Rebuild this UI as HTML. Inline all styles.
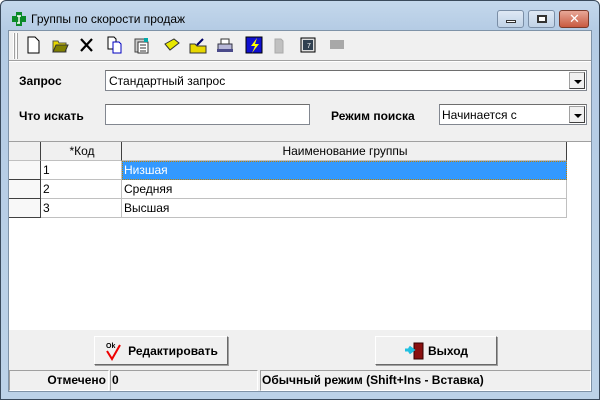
<!DOCTYPE html>
<html><head><meta charset="utf-8"><style>
*{box-sizing:border-box;margin:0;padding:0}
body{width:600px;height:400px;overflow:hidden;font-family:"Liberation Sans","DejaVu Sans",sans-serif;font-size:12px;background:#fff}
.win{position:absolute;left:0;top:0;width:600px;height:400px;background:linear-gradient(#c4d8ec,#b4cbe4 30px,#bcd2e8);border:1px solid #3a4a5c;border-radius:6px 6px 0 0}
.title{position:absolute;left:30px;top:11px;font-size:12px;color:#000}
.client{position:absolute;left:8px;top:30px;width:584px;height:362px;background:#f0f0f0;border:1px solid #7f93a8}
.abs{position:absolute}
.cbtn{position:absolute;top:9px;height:18px;border:1px solid #7a8ea6;border-radius:3px;background:linear-gradient(#dfe9f5,#c0d2e6)}
.in{position:absolute;background:#fff;border:1px solid #828790;border-top-color:#6e6e6e}
.arrow{position:absolute;right:1px;top:1px;width:16px;bottom:1px;background:#f0f0f0;border:1px solid #a0a0a0;border-right-color:#404040;border-bottom-color:#404040}
.arrow:after{content:"";position:absolute;left:4px;top:7px;border:4px solid transparent;border-top:4px solid #000;border-bottom:0}
.lbl{position:absolute;font-weight:bold;font-size:12px}
.btn{position:absolute;background:#f0f0f0;border:1px solid #fff;border-right-color:#696969;border-bottom-color:#696969;box-shadow:1px 1px 0 #a0a0a0;font-weight:bold;font-size:12px;display:flex;align-items:center;justify-content:center}
.sp{position:absolute;top:370px;height:21px;border:1px solid #a0a0a0;border-right-color:#fff;border-bottom-color:#fff;font-weight:bold;font-size:12px;line-height:19px}
.cell{position:absolute;border-right:1px solid #c0c0c0;border-bottom:1px solid #c0c0c0;line-height:18px;padding-left:2px}
</style></head><body>
<div class="win">
<svg class="abs" style="left:10px;top:10px" width="16" height="16"><rect x="5" y="1" width="6" height="14" fill="#0a8a28"/><rect x="1" y="5" width="14" height="6" fill="#0a8a28"/><path d="M6 5h4M8 5v7M6 12h3" stroke="#fff" stroke-width="1.4" fill="none"/></svg>
<div class="title">Группы по скорости продаж</div>
<div class="cbtn" style="left:496px;width:27px"><div class="abs" style="left:8px;top:9px;width:10px;height:3px;background:#fff;border:1px solid #333"></div></div>
<div class="cbtn" style="left:527px;width:27px"><div class="abs" style="left:8px;top:4px;width:10px;height:8px;border:2px solid #333;background:#fff"></div></div>
<div class="cbtn" style="left:558px;width:30px;background:linear-gradient(#e8a898,#c85a40);border-color:#7a3a2a"><div class="abs" style="left:9px;top:0px;color:#fff;font-weight:bold;font-size:13px">✕</div></div>
</div>
<div class="client"></div>
<div class="abs" style="left:13px;top:33px;width:2px;height:26px;border-left:1px solid #fff;border-right:1px solid #a0a0a0"></div>
<div class="abs" style="left:16px;top:33px;width:2px;height:26px;border-left:1px solid #fff;border-right:1px solid #a0a0a0"></div>
<svg class="abs" style="left:25px;top:36px" width="330" height="18">
<path d="M3 1h7l4 4v12H3z" fill="#fff" stroke="#000"/>
<path d="M28 5h5l1 2h7v9H28z" fill="#e8d800" stroke="#554" /><path d="M28 16l3-7h12l-3 7z" fill="#808000" stroke="#333"/>
<path d="M56 3l11 12M67 3L56 15" stroke="#000" stroke-width="2.2"/>
<path d="M83 1h6l2 2v10h-8z" fill="#fff" stroke="#000"/><path d="M88 6h6l2 2v9h-8z" fill="#fff" stroke="#0000c0"/>
<rect x="110" y="3" width="11" height="13" fill="#ccc" stroke="#444"/><rect x="113" y="6" width="10" height="11" fill="#fff" stroke="#333"/><path d="M115 9h6M115 12h6M115 15h6" stroke="#333"/><rect x="119" y="2" width="4" height="4" fill="#0aa"/>
<path d="M140 8l9-5 5 4-9 7z" fill="#e8e800" stroke="#333"/>
<path d="M165 8h5l2 2h9v7h-16z" fill="#e8d800" stroke="#333"/><path d="M172 9l6-6" stroke="#006" stroke-width="2"/>
<rect x="193" y="8" width="14" height="6" fill="#b8b8d8" stroke="#334"/><rect x="196" y="3" width="8" height="5" fill="#fff" stroke="#333"/><rect x="192" y="13" width="16" height="3" fill="#4a4a8a"/>
<rect x="221" y="1" width="16" height="16" fill="#1010d0" stroke="#000"/><path d="M232 2l-6 8h4l-3 7 7-9h-4z" fill="#ff0"/>
<path d="M250 3h6l2 2v12h-8z" fill="#c0c0c0" stroke="#aaa"/>
<rect x="276" y="2" width="14" height="14" fill="#e0e0e0" stroke="#000"/><rect x="278" y="4" width="10" height="10" fill="#304050"/><text x="282" y="12" font-size="7" fill="#fff" font-family="Liberation Sans">7</text>
<rect x="305" y="4" width="14" height="9" fill="#a8a8a8"/>
</svg>
<div class="abs" style="left:9px;top:60px;width:582px;height:2px;border-top:1px solid #a0a0a0;border-bottom:1px solid #fff"></div>
<div class="lbl" style="left:19px;top:74px">Запрос</div>
<div class="in" style="left:105px;top:70px;width:482px;height:21px"><span class="abs" style="left:3px;top:3px">Стандартный запрос</span><div class="arrow"></div></div>
<div class="lbl" style="left:19px;top:109px">Что искать</div>
<div class="in" style="left:105px;top:104px;width:205px;height:21px"></div>
<div class="lbl" style="left:331px;top:109px">Режим поиска</div>
<div class="in" style="left:439px;top:104px;width:148px;height:21px"><span class="abs" style="left:2px;top:3px">Начинается с</span><div class="arrow"></div></div>
<div class="abs" style="left:9px;top:141px;width:582px;height:189px;background:#fff;border-top:1px solid #a0a0a0"></div>
<div class="abs" style="left:9px;top:142px;width:558px;height:19px;background:#f0f0f0;border-bottom:1px solid #404040"></div>
<div class="cell" style="left:9px;top:142px;width:32px;height:19px;border-right-color:#404040"></div>
<div class="cell" style="left:41px;top:142px;width:81px;height:19px;text-align:center;border-right-color:#404040">*Код</div>
<div class="cell" style="left:122px;top:142px;width:445px;height:19px;text-align:center;border-right-color:#404040">Наименование группы</div>
<div class="cell" style="left:9px;top:161px;width:32px;height:19px;background:#f8f8f8;border-right-color:#404040;border-bottom-color:#404040"></div>
<div class="cell" style="left:9px;top:180px;width:32px;height:19px;background:#f8f8f8;border-right-color:#404040;border-bottom-color:#404040"></div>
<div class="cell" style="left:9px;top:199px;width:32px;height:19px;background:#f8f8f8;border-right-color:#404040;border-bottom-color:#404040"></div>
<div class="cell" style="left:41px;top:161px;width:81px;height:19px">1</div>
<div class="cell" style="left:41px;top:180px;width:81px;height:19px">2</div>
<div class="cell" style="left:41px;top:199px;width:81px;height:19px">3</div>
<div class="cell" style="left:122px;top:161px;width:445px;height:19px;background:#3399ff;color:#fff;border:1px dotted #c08000;padding-left:1px;line-height:16px">Низшая</div>
<div class="cell" style="left:122px;top:180px;width:445px;height:19px">Средняя</div>
<div class="cell" style="left:122px;top:199px;width:445px;height:19px">Высшая</div>
<div class="btn" style="left:94px;top:336px;width:134px;height:29px"><svg width="20" height="20" style="margin-right:4px"><text x="2" y="7" font-size="7" font-family="Liberation Sans">Ok</text><path d="M3 10l5 8 8-14" stroke="#e00" stroke-width="2" fill="none"/></svg>Редактировать</div>
<div class="btn" style="left:375px;top:336px;width:122px;height:29px"><svg width="22" height="20" style="margin-right:2px"><rect x="10" y="2" width="9" height="16" fill="#8a1010" stroke="#300"/><path d="M1 9h7M5 6l4 3-4 3" stroke="#20c0e0" stroke-width="3" fill="none"/></svg>Выход</div>
<div class="sp" style="left:9px;width:100px;text-align:right;padding-right:2px">Отмечено</div>
<div class="sp" style="left:110px;width:148px;padding-left:1px">0</div>
<div class="sp" style="left:260px;width:331px;padding-left:1px">Обычный режим (Shift+Ins - Вставка)</div>
</body></html>
